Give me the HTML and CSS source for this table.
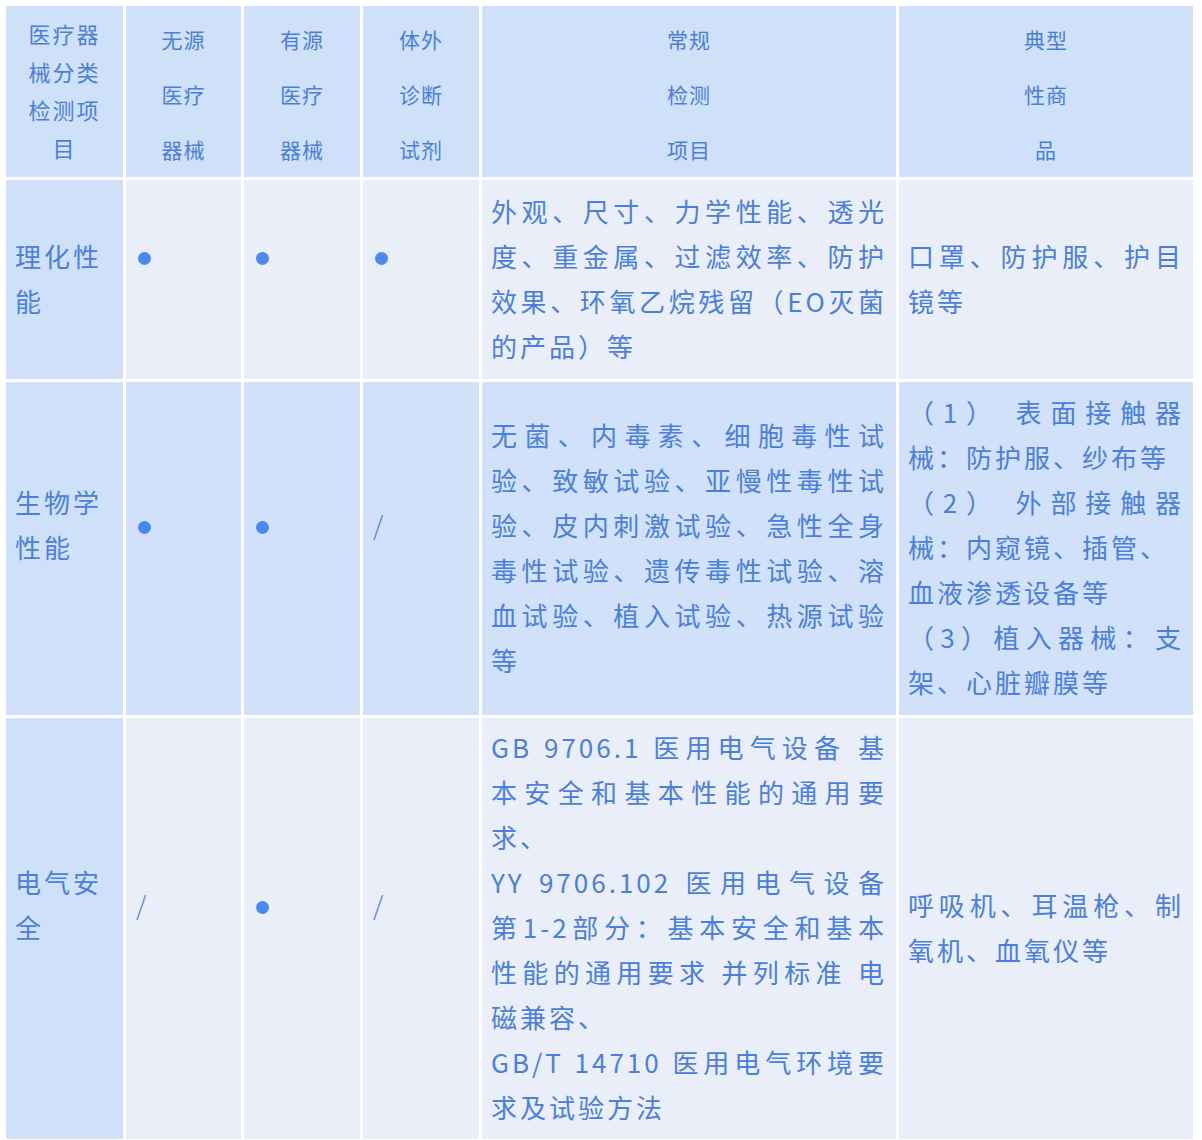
FILE: index.html
```html
<!DOCTYPE html>
<html lang="zh-CN">
<head>
<meta charset="utf-8">
<title>医疗器械分类检测项目</title>
<link rel="stylesheet" href="styles.css">
</head>
<body>
<table class="grid">
  <thead>
    <tr class="head">
      <th class="c1 h-first">医疗器<br>械分类<br>检测项<br>目</th>
      <th class="c2">无源<br>医疗<br>器械</th>
      <th class="c3">有源<br>医疗<br>器械</th>
      <th class="c4">体外<br>诊断<br>试剂</th>
      <th class="c5">常规<br>检测<br>项目</th>
      <th class="c6">典型<br>性商<br>品</th>
    </tr>
  </thead>
  <tbody>
    <tr class="row r1 light">
      <td class="label">理化性能</td>
      <td class="mark up"><span class="dot"></span></td>
      <td class="mark up"><span class="dot"></span></td>
      <td class="mark up"><span class="dot"></span></td>
      <td class="text">外观、尺寸、力学性能、透光度、重金属、过滤效率、防护效果、环氧乙烷残留（EO灭菌的产品）等</td>
      <td class="text">口罩、防护服、护目镜等</td>
    </tr>
    <tr class="row r2 blue">
      <td class="label up">生物学性能</td>
      <td class="mark up"><span class="dot"></span></td>
      <td class="mark up"><span class="dot"></span></td>
      <td class="mark up"><span class="slash">/</span></td>
      <td class="text">无菌、内毒素、细胞毒性试验、致敏试验、亚慢性毒性试验、皮内刺激试验、急性全身毒性试验、遗传毒性试验、溶血试验、植入试验、热源试验等</td>
      <td class="text">
        <p class="para"><span class="jl">（1） 表面接触器</span>械：防护服、纱布等</p>
        <p class="para"><span class="jl">（2） 外部接触器</span>械：内窥镜、插管、<br>血液渗透设备等</p>
        <p class="para"><span class="jl">（3）植入器械：支</span>架、心脏瓣膜等</p>
      </td>
    </tr>
    <tr class="row r3 light">
      <td class="label up">电气安全</td>
      <td class="mark up"><span class="slash">/</span></td>
      <td class="mark up"><span class="dot"></span></td>
      <td class="mark up"><span class="slash">/</span></td>
      <td class="text">
        <p class="para"><span class="jl">GB 9706.1 医用电气设备 基</span><span class="jl">本安全和基本性能的通用要</span>求、</p>
        <p class="para"><span class="jl">YY 9706.102 医用电气设备</span><span class="jl">第1-2部分：基本安全和基本</span><span class="jl">性能的通用要求 并列标准 电</span>磁兼容、</p>
        <p class="para"><span class="jl">GB/T 14710 医用电气环境要</span>求及试验方法</p>
      </td>
      <td class="text">呼吸机、耳温枪、制氧机、血氧仪等</td>
    </tr>
  </tbody>
</table>
</body>
</html>
```

FILE: styles.css
```css
html, body {
  background: #ffffff;
}

body {
  margin: 3px;
  font-family: "Noto Sans CJK SC", "Noto Sans", sans-serif;
  color: #4a80da;
}

.grid {
  border-collapse: separate;
  border-spacing: 3px;
  table-layout: fixed;
  width: 1193px;
}

.grid th,
.grid td {
  box-sizing: border-box;
  vertical-align: middle;
}

/* column widths */
.c1 { width: 117px; }
.c2 { width: 115px; }
.c3 { width: 116px; }
.c4 { width: 116px; }
.c5 { width: 414px; }
.c6 { width: 294px; }

/* header */
.head {
  height: 171px;
}

.head th {
  background: #cfe0f9;
  color: #4a7fd8;
  font-weight: normal;
  font-size: 21px;
  letter-spacing: 1px;
  line-height: 55px;
  text-align: center;
  padding: 6px 0 0 0;
}

.head th.h-first {
  font-size: 22px;
  letter-spacing: 2px;
  line-height: 38px;
  padding: 0 0 4px 0;
}

/* body rows */
.r1 { height: 199px; }
.r2 { height: 333px; }
.r3 { height: 421px; }

.row td {
  font-size: 26px;
  letter-spacing: 3px;
  line-height: 45px;
  padding: 6px 9px 10px 9px;
  text-align: justify;
}

.light td { background: #e9eef8; }
.blue td { background: #d0e1f9; }

.row td.label {
  background: #cfe0f9;
  text-align: left;
}

.row td.label.up {
  padding-bottom: 55px;
}

.row td.mark {
  text-align: left;
  padding-bottom: 57px;
}

.dot {
  display: inline-block;
  width: 13px;
  height: 13px;
  border-radius: 50%;
  background: #4a8af0;
  margin-left: 3px;
  vertical-align: middle;
}

.slash {
  display: inline-block;
  margin-left: 1px;
  font-weight: 300;
}

.para {
  margin: 0;
}

.jl {
  display: block;
  text-align: justify;
  text-align-last: justify;
  white-space: nowrap;
}
```
